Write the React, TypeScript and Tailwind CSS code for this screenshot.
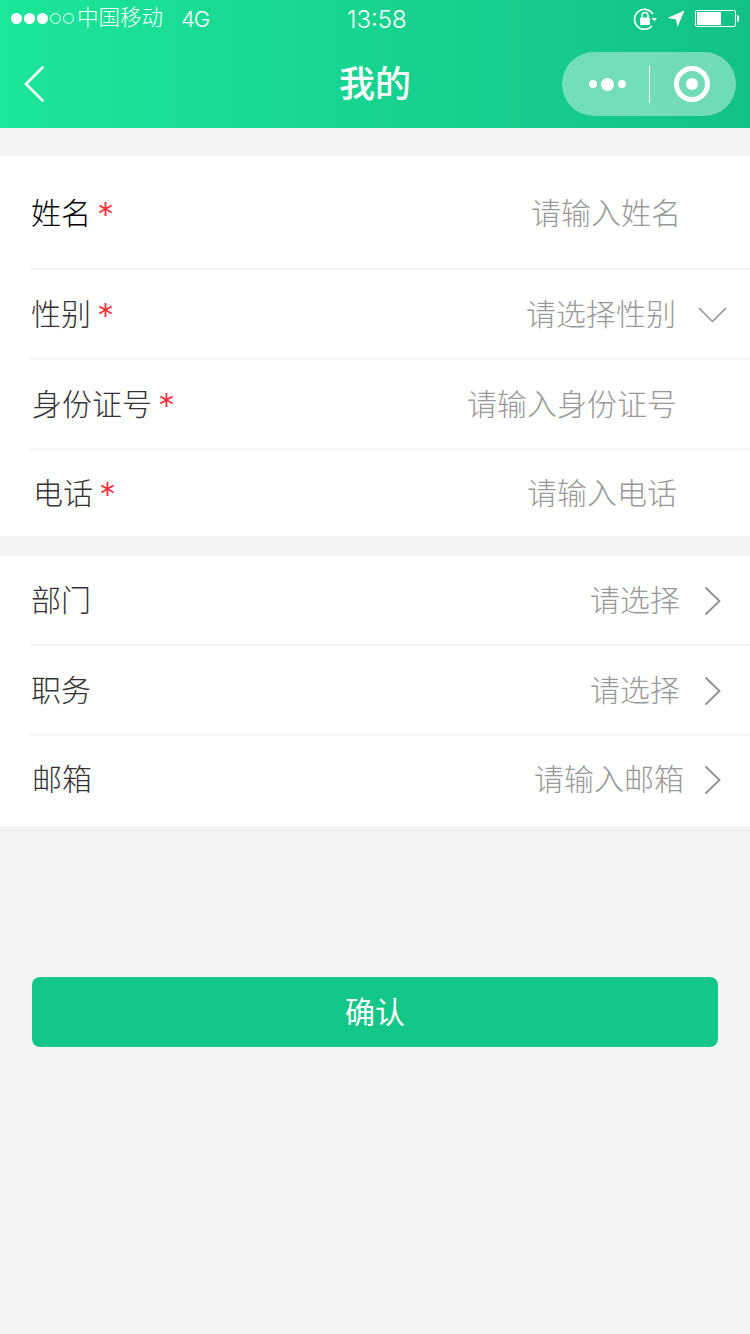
const FONT = "font-['Liberation_Sans','Noto_Sans_CJK_SC',sans-serif]";

function Down() {
  return (
    <svg width="30" height="18" viewBox="0 0 30 18" fill="none" className="shrink-0">
      <path d="M2 2 L15.5 15.5 L29 2" stroke="#8f8f8f" strokeWidth="1.5" />
    </svg>
  );
}

function Right() {
  return (
    <svg width="18" height="30" viewBox="0 0 18 30" fill="none" className="shrink-0">
      <path d="M1.5 1.5 L15.5 15 L1.5 28.5" stroke="#8f8f8f" strokeWidth="1.8" />
    </svg>
  );
}

function Divider() {
  return <div className="ml-[30px] h-[2px] bg-[#f4f4f4]" />;
}

function Star() {
  return <span className="ml-[6px] inline-block translate-y-[1px] font-['Inter'] text-[34px] leading-[30px] font-light text-[#fb2c36]">*</span>;
}

export default function App() {
  return (
    <div className={`${FONT} flex h-[1334px] w-[750px] flex-col bg-[#f4f4f4] font-light`}>
      <header className="h-[128px] bg-[linear-gradient(to_right,#1be699,#13c186)] text-white">
        <div className="relative flex h-[40px] items-center pb-[3px] pl-[11px] pr-[11px]">
          <div className="flex items-center gap-[2px]">
            <i className="h-[11px] w-[11px] rounded-full bg-white" />
            <i className="h-[11px] w-[11px] rounded-full bg-white" />
            <i className="h-[11px] w-[11px] rounded-full bg-white" />
            <i className="h-[11px] w-[11px] rounded-full border border-white" />
            <i className="h-[11px] w-[11px] rounded-full border border-white" />
          </div>
          <span className="ml-[3px] text-[21.5px] leading-none font-light">中国移动</span>
          <span className="ml-[18px] text-[22px] leading-none tracking-[-1px] font-['Inter'] font-light">4G</span>
          <span className="absolute left-[347px] top-[7px] text-[24px] leading-[26px] font-['Inter'] font-light">13:58</span>
          <div className="ml-auto flex items-center">
            <svg width="24" height="24" viewBox="0 0 24 24" fill="none">
              <path d="M20 7 A10 10 0 1 0 19 19" stroke="white" strokeWidth="1.5" />
              <path d="M18.5 11 h5.5 l-2.7 3.2 z" fill="white" />
              <rect x="7" y="10.5" width="10" height="7.5" rx="1" fill="white" />
              <path d="M9 11 V8.5 a3 3 0 0 1 6 0 V11" stroke="white" strokeWidth="1.4" />
            </svg>
            <svg className="ml-[10px]" width="18" height="18" viewBox="0 0 18 18">
              <path d="M0.5 8 L17.5 0.5 L10.5 17 L9 9.5 Z" fill="white" />
            </svg>
            <div className="ml-[10px] flex items-center">
              <div className="flex h-[17px] w-[41px] items-center rounded-[2px] border border-white p-[1px]">
                <div className="h-full w-[24px] bg-white" />
              </div>
              <div className="ml-[1px] h-[7px] w-[2px] rounded-r-full bg-white" />
            </div>
          </div>
        </div>
        <div className="relative flex h-[88px] items-center justify-center pt-[1px]">
          <svg className="absolute left-[23px] top-[25px]" width="23" height="38" viewBox="0 0 23 38" fill="none">
            <path d="M19.5 2.5 L3 19 L19.5 35.5" stroke="white" strokeWidth="2.6" strokeLinecap="round" />
          </svg>
          <span className="text-[36px] font-medium leading-none">我的</span>
          <div className="absolute left-[562px] top-[12px] flex h-[64px] w-[174px] items-center rounded-full bg-white/40">
            <div className="flex w-[87px] items-center justify-center gap-[4px] pl-[4px]">
              <i className="h-[8px] w-[8px] rounded-full bg-white" />
              <i className="h-[13px] w-[13px] rounded-full bg-white" />
              <i className="h-[8px] w-[8px] rounded-full bg-white" />
            </div>
            <div className="h-[37px] w-[1px] bg-white" />
            <div className="flex flex-1 items-center justify-center pr-[2px]">
              <div className="flex h-[36px] w-[36px] items-center justify-center rounded-full border-[5px] border-white">
                <i className="h-[12px] w-[12px] rounded-full bg-white" />
              </div>
            </div>
          </div>
        </div>
      </header>

      <section className="mt-[28px] bg-white">
        <div className="flex h-[112px] items-center pl-[31px] pr-[69px] pt-[4px]">
          <span className="text-[30px] leading-none text-black">姓名</span>
          <Star />
          <span className="ml-auto text-[30px] leading-none text-[#999]">请输入姓名</span>
        </div>
        <Divider />
        <div className="flex h-[88px] items-center pl-[31px] pr-[23px] pt-[2px]">
          <span className="text-[30px] leading-none text-[#333]">性别</span>
          <Star />
          <span className="ml-auto text-[30px] leading-none text-[#999]">请选择性别</span>
          <span className="ml-[21px]"><Down /></span>
        </div>
        <Divider />
        <div className="flex h-[88px] items-center pl-[32px] pr-[73px] pt-[2px]">
          <span className="text-[30px] leading-none text-[#333]">身份证号</span>
          <Star />
          <span className="ml-auto text-[30px] leading-none text-[#999]">请输入身份证号</span>
        </div>
        <Divider />
        <div className="flex h-[86px] items-center pl-[33px] pr-[73px] pt-[2px]">
          <span className="text-[30px] leading-none text-[#333]">电话</span>
          <Star />
          <span className="ml-auto text-[30px] leading-none text-[#999]">请输入电话</span>
        </div>
      </section>

      <section className="mt-[20px] bg-white">
        <div className="flex h-[88px] items-center pl-[31px] pr-[28px] pt-[2px]">
          <span className="text-[30px] leading-none text-[#333]">部门</span>
          <span className="ml-auto text-[30px] leading-none text-[#999]">请选择</span>
          <span className="ml-[24px]"><Right /></span>
        </div>
        <Divider />
        <div className="flex h-[88px] items-center pl-[31px] pr-[28px] pt-[2px]">
          <span className="text-[30px] leading-none text-[#333]">职务</span>
          <span className="ml-auto text-[30px] leading-none text-[#999]">请选择</span>
          <span className="ml-[24px]"><Right /></span>
        </div>
        <Divider />
        <div className="flex h-[90px] items-center pl-[32px] pr-[28px] pb-[2px]">
          <span className="text-[30px] leading-none text-[#333]">邮箱</span>
          <span className="ml-auto text-[30px] leading-none text-[#999]">请输入邮箱</span>
          <span className="ml-[20px]"><Right /></span>
        </div>
      </section>

      <button className="mx-[32px] mt-[151px] h-[70px] rounded-[8px] bg-[#14c688] pt-[2px] text-[30px] leading-none font-normal text-white">确认</button>
    </div>
  );
}
